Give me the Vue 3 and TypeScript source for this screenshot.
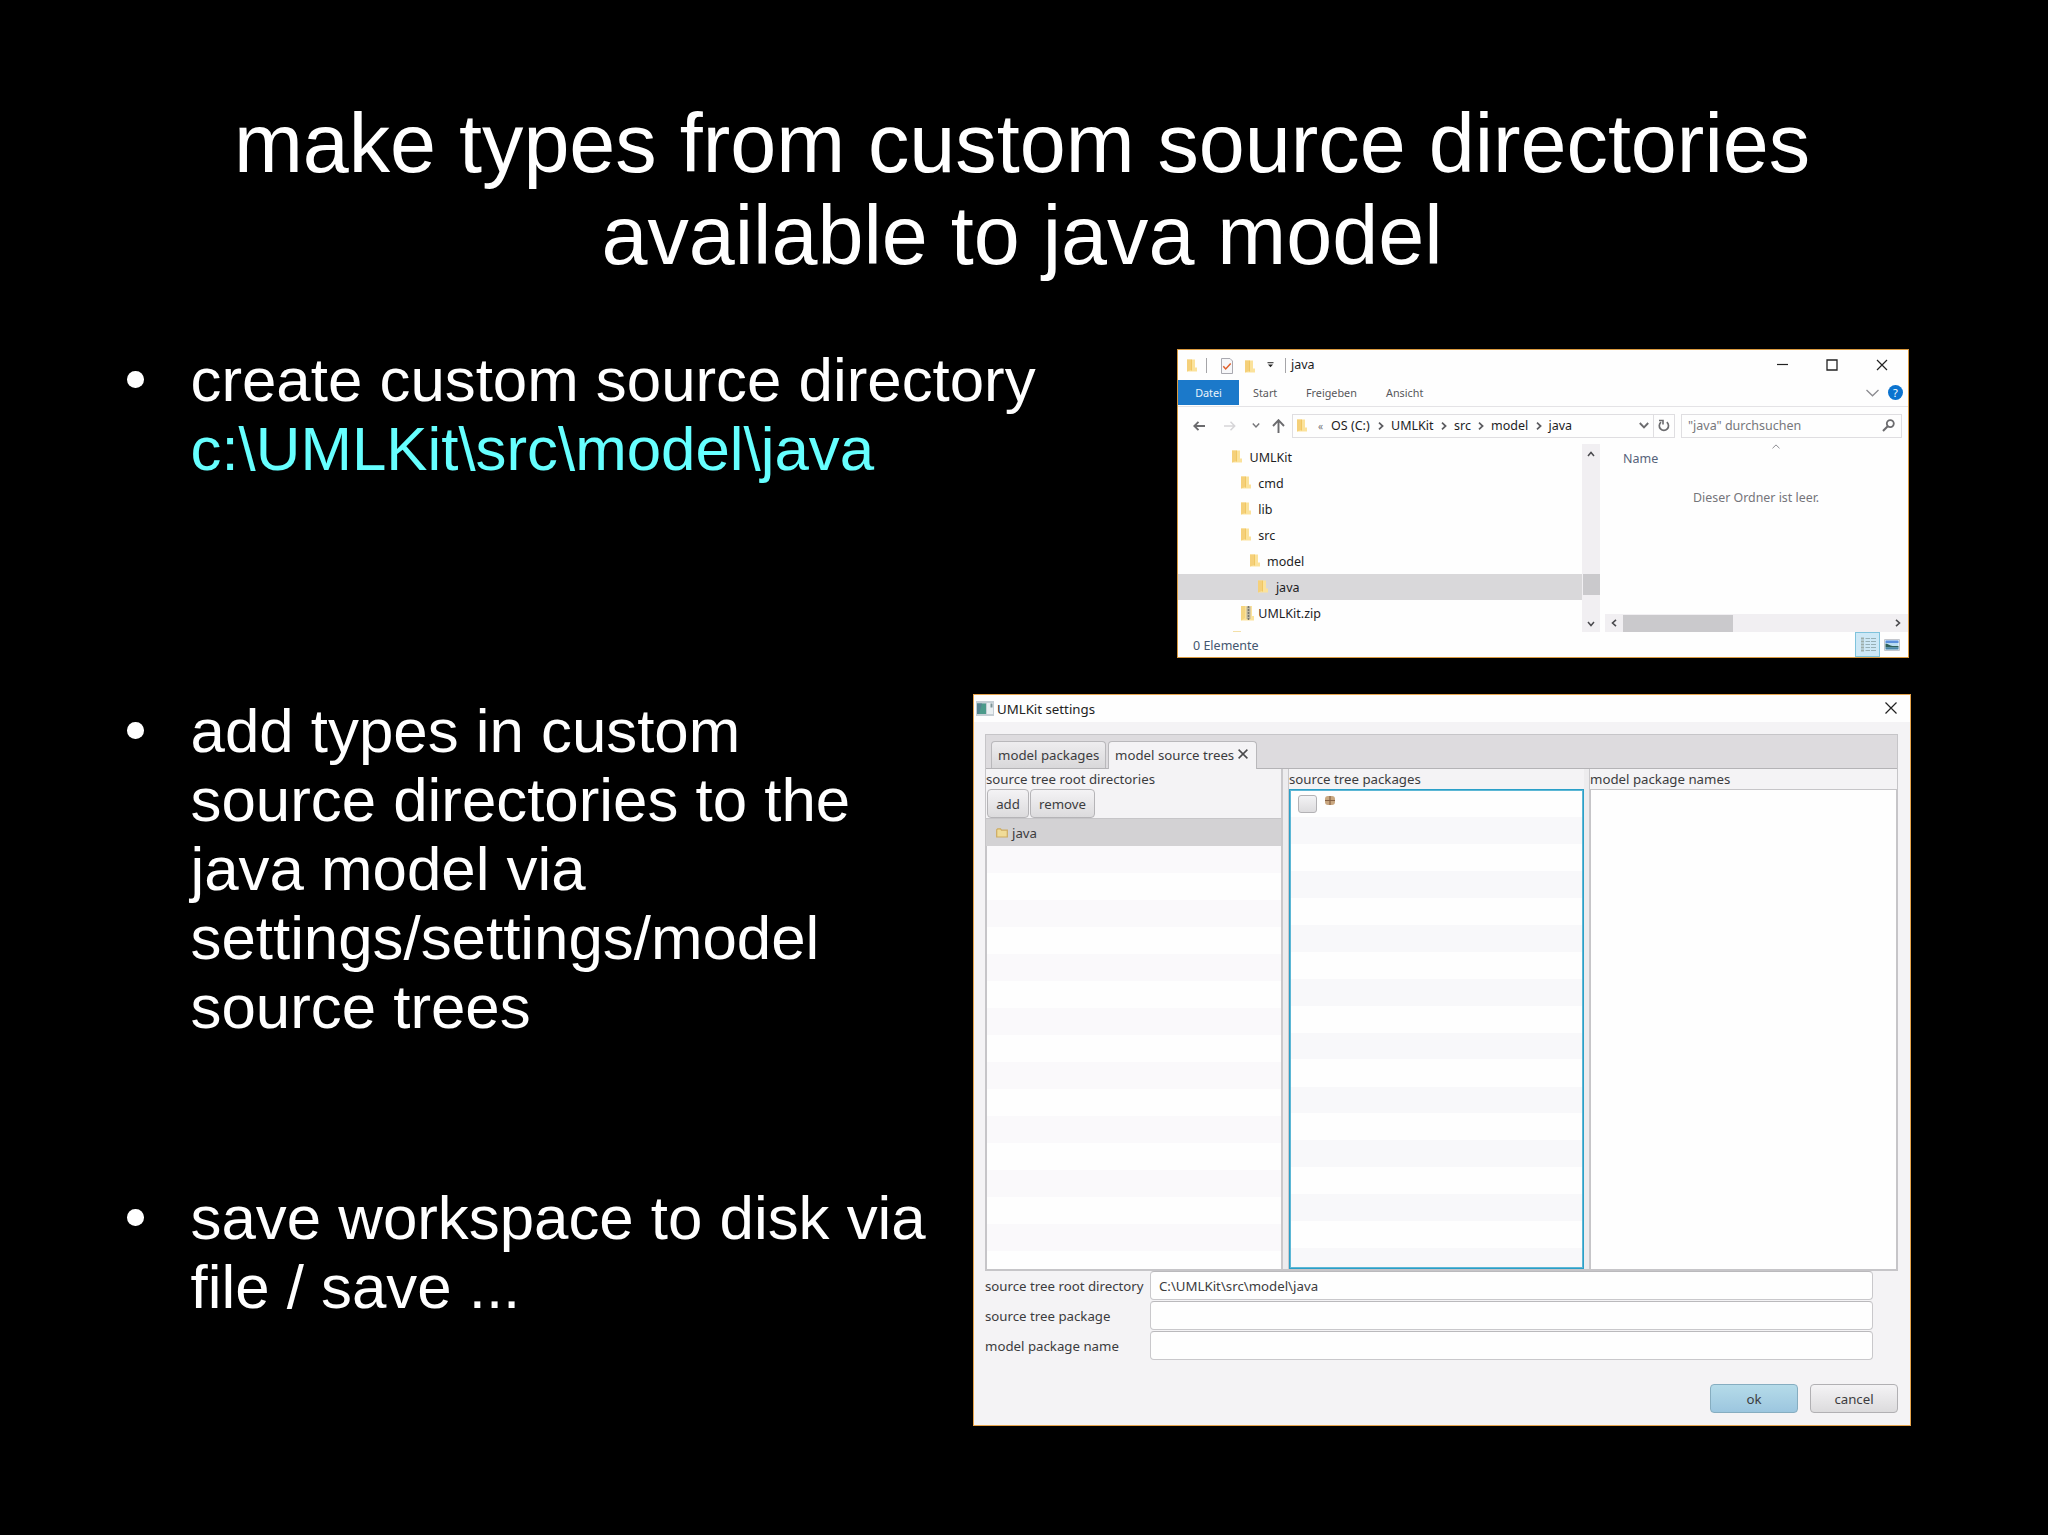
<script setup lang="ts">
interface Bullet {
  lines: { text: string; accent?: boolean }[]
}
interface TreeNode {
  name: string
  depth: number
  zip?: boolean
  selected?: boolean
}

const titleLines: string[] = ['make types from custom source directories', 'available to java model']

const bullets: Bullet[] = [
  { lines: [{ text: 'create custom source directory' }, { text: 'c:\\UMLKit\\src\\model\\java', accent: true }] },
  {
    lines: [
      { text: 'add types in custom' },
      { text: 'source directories to the' },
      { text: 'java model via' },
      { text: 'settings/settings/model' },
      { text: 'source trees' },
    ],
  },
  { lines: [{ text: 'save workspace to disk via' }, { text: 'file / save ...' }] },
]

const ribbonTabs: string[] = ['Start', 'Freigeben', 'Ansicht']

const crumbs = [
  { name: 'OS (C:)', width: 60 },
  { name: 'UMLKit', width: 63 },
  { name: 'src', width: 37 },
  { name: 'model', width: 57.5 },
]

const tree: TreeNode[] = [
  { name: 'UMLKit', depth: 0 },
  { name: 'cmd', depth: 1 },
  { name: 'lib', depth: 1 },
  { name: 'src', depth: 1 },
  { name: 'model', depth: 2 },
  { name: 'java', depth: 3, selected: true },
  { name: 'UMLKit.zip', depth: 1, zip: true },
]

const fields = [
  { label: 'source tree root directory', value: 'C:\\UMLKit\\src\\model\\java' },
  { label: 'source tree package', value: '' },
  { label: 'model package name', value: '' },
]
</script>

<template>
  <main class="slide">
    <h1 class="title">
      <span v-for="line in titleLines" :key="line">{{ line }}</span>
    </h1>

    <div class="content">
      <ul class="bullets">
        <li v-for="(b, i) in bullets" :key="i" :class="'b' + i">
          <i class="dot"></i>
          <div>
            <div v-for="l in b.lines" :key="l.text" class="line" :class="{ accent: l.accent }">{{ l.text }}</div>
          </div>
        </li>
      </ul>

      <div class="windows">
        <section class="explorer">
          <header class="ex-title">
            <svg class="folder" viewBox="0 0 10 13"><path d="M0 .5h8v8h2v4H0z" fill="#fbe29b" /><path d="M0 .5h4v10.500l-4 1.500z" fill="#f5d07a" /><path d="M4 .5h1v11H4z" fill="#f0c763" /></svg>
            <i class="sep s1"></i>
            <svg class="doc" width="12" height="16" viewBox="0 0 12 16"><path d="M.5.5h8.500l2.500 2.500v12.500H.5z" fill="#f7f7f9" stroke="#a9a9b0" /><path d="M2.300 8.300l2.400 2.700 5-5.500" fill="none" stroke="#e0602c" stroke-width="1.500" /></svg>
            <svg class="folder f2" viewBox="0 0 10 13"><path d="M0 .5h8v8h2v4H0z" fill="#fbe29b" /><path d="M0 .5h4v10.500l-4 1.500z" fill="#f5d07a" /><path d="M4 .5h1v11H4z" fill="#f0c763" /></svg>
            <svg class="caret" width="7" height="6" viewBox="0 0 7 6"><path d="M.5.700h6" stroke="#333" stroke-width="1.100" /><path d="M1 2.500h5L3.500 5.200z" fill="#222" /></svg>
            <i class="sep s2"></i>
            <span class="ex-name">java</span>
            <svg class="min" width="11" height="12" viewBox="0 0 11 12"><path d="M0 5.500h11" stroke="#222" stroke-width="1.200" /></svg>
            <svg class="max" width="12" height="12" viewBox="0 0 12 12"><path d="M1 1h10v10H1z" fill="none" stroke="#222" stroke-width="1.300" /></svg>
            <svg class="cls" width="12" height="12" viewBox="0 0 12 12"><path d="M1 1l10 10M11 1L1 11" stroke="#222" stroke-width="1.200" /></svg>
          </header>

          <nav class="ribbon">
            <span class="datei">Datei</span>
            <span v-for="t in ribbonTabs" :key="t" class="rtab" :class="t.toLowerCase()">{{ t }}</span>
            <svg class="expand" width="13" height="8" viewBox="0 0 13 8"><path d="M.5 1l6 5.800 6-5.800" fill="none" stroke="#8b8b90" stroke-width="1.300" /></svg>
            <span class="help">?</span>
          </nav>

          <div class="address">
            <svg class="back" width="12" height="10" viewBox="0 0 12 10"><path d="M12 5H1.500M5.500.8L1.300 5l4.200 4.200" fill="none" stroke="#6b6b6e" stroke-width="1.900" /></svg>
            <svg class="fwd" width="12" height="10" viewBox="0 0 12 10"><path d="M0 5h10.500M6.500.8L10.700 5 6.500 9.200" fill="none" stroke="#d6d5d8" stroke-width="1.500" /></svg>
            <svg class="hist" width="8" height="5" viewBox="0 0 8 5"><path d="M.8.6L4 3.900 7.200.6" fill="none" stroke="#77777a" stroke-width="1.500" /></svg>
            <svg class="up" width="13" height="14" viewBox="0 0 13 14"><path d="M6.500 14V1.500M1 7l5.500-5.800L12 7" fill="none" stroke="#6b6b6e" stroke-width="1.900" /></svg>
            <div class="path">
              <svg class="folder" viewBox="0 0 10 13"><path d="M0 .5h8v8h2v4H0z" fill="#fbe29b" /><path d="M0 .5h4v10.500l-4 1.500z" fill="#f5d07a" /><path d="M4 .5h1v11H4z" fill="#f0c763" /></svg>
              <span class="more">«</span>
              <span v-for="c in crumbs" :key="c.name" class="crumb" :style="{ width: c.width + 'px' }">
                {{ c.name }}
                <svg width="6" height="8" viewBox="0 0 6 8"><path d="M1 .7L4.600 4 1 7.300" fill="none" stroke="#5c5c60" stroke-width="1.700" /></svg>
              </span>
              <span>java</span>
              <svg class="drop" width="10" height="7" viewBox="0 0 10 7"><path d="M.8 1L5 5.300 9.200 1" fill="none" stroke="#6b6b6e" stroke-width="1.900" /></svg>
              <span class="refresh">
                <svg width="12" height="13" viewBox="0 0 12 13"><path d="M8.800 3.200A4.600 4.600 0 1 1 3 3.200" fill="none" stroke="#6b6b6e" stroke-width="1.700" /><path d="M1 1.500h4v4" fill="none" stroke="#6b6b6e" stroke-width="1.600" /></svg>
              </span>
            </div>
            <div class="search">
              <span>"java" durchsuchen</span>
              <svg width="13" height="13" viewBox="0 0 13 13"><circle cx="8.300" cy="4.600" r="3.500" fill="none" stroke="#6b6b6e" stroke-width="1.800" /><path d="M5.700 7.200L1 12" stroke="#6b6b6e" stroke-width="2" /></svg>
            </div>
          </div>

          <div class="ex-body">
            <div class="tree">
              <div v-for="n in tree" :key="n.name + n.depth" class="node" :class="{ selected: n.selected }" :style="{ paddingLeft: 54 + n.depth * 8.8 + 'px' }">
                <svg v-if="!n.zip" class="folder" viewBox="0 0 10 13"><path d="M0 .5h8v8h2v4H0z" fill="#fbe29b" /><path d="M0 .5h4v10.500l-4 1.500z" fill="#f5d07a" /><path d="M4 .5h1v11H4z" fill="#f0c763" /></svg>
                <svg v-else class="zip" viewBox="0 0 13 16"><path d="M0 1h11v10h2v4.500H0z" fill="#fbe29b" /><path d="M0 1h4v12l-4 2.500z" fill="#f5d580" /><path d="M5.500 1.500h4V14h-4z" fill="#bdb7a0" /><path d="M7.500 1v14" stroke="#77756c" stroke-width="1.500" stroke-dasharray="2 1" /></svg>
                <span>{{ n.name }}</span>
              </div>
              <div class="cut"></div>
            </div>
            <div class="vscroll">
              <svg class="a-up" width="8" height="6" viewBox="0 0 8 6"><path d="M1 5l3-3.500L7 5" fill="none" stroke="#4a4a4e" stroke-width="1.500" /></svg>
              <i class="vthumb"></i>
              <svg class="a-down" width="8" height="6" viewBox="0 0 8 6"><path d="M1 1l3 3.500L7 1" fill="none" stroke="#4a4a4e" stroke-width="1.500" /></svg>
            </div>
            <div class="files">
              <svg class="sort" width="8" height="5" viewBox="0 0 8 5"><path d="M.5 4.300L4 .9l3.500 3.400" fill="none" stroke="#8d8d92" /></svg>
              <div class="col-name">Name</div>
              <div class="empty">Dieser Ordner ist leer.</div>
              <div class="hscroll">
                <svg width="6" height="8" viewBox="0 0 6 8"><path d="M5 .8L1.500 4 5 7.200" fill="none" stroke="#4a4a4e" stroke-width="1.600" /></svg>
                <i class="hthumb"></i>
                <svg class="a-right" width="6" height="8" viewBox="0 0 6 8"><path d="M1 .8L4.500 4 1 7.200" fill="none" stroke="#4a4a4e" stroke-width="1.600" /></svg>
              </div>
            </div>
          </div>

          <footer class="status">
            <span>0 Elemente</span>
            <i class="view">
              <svg width="16" height="16" viewBox="0 0 16 16"><path d="M1 1.500h3M1 4.500h3M1 7.500h3M1 10.500h3M1 13.500h3" stroke="#9dadaa" stroke-width="1.800" /><path d="M5.500 1.500H10M5.500 4.500H10M5.500 7.500H10M5.500 10.500H10M5.500 13.500H10M11 1.500h5M11 4.500h5M11 7.500h5M11 10.500h5M11 13.500h5" stroke="#97b0b6" /></svg>
            </i>
            <svg class="pic" width="16" height="12" viewBox="0 0 16 12"><path d="M.5.500h15v11H.5z" fill="#fff" stroke="#c3c6cc" /><path d="M1.500 1.500h13v9h-13z" fill="#b9dcf2" /><path d="M1.500 1.500h13V4h-13z" fill="#5b8fdc" /><path d="M1.500 4.500c3 0 4 2.500 7 2.500h6v1.500h-13z" fill="#2f5f58" /><path d="M1.500 8.500h13v2h-13z" fill="#4a86a8" /></svg>
          </footer>
        </section>

        <section class="settings">
          <header class="st-title">
            <svg width="18" height="15" viewBox="0 0 18 15"><path d="M0 0h18v15H0z" fill="#c5ced4" /><path d="M1 2.500h9v10.500H1z" fill="#4b9a8a" /><path d="M1 2.500h5l-3 10.500H1z" fill="#55828f" /><path d="M11 2h6v11h-6z" fill="#e9eff1" /><path d="M14.500 2.500h2v4h-2z" fill="#7d9397" /></svg>
            <span>UMLKit settings</span>
            <svg class="cls" width="12" height="12" viewBox="0 0 12 12"><path d="M.5.500l11 11M11.500.500l-11 11" stroke="#222" stroke-width="1.200" /></svg>
          </header>

          <div class="pane">
            <div class="tabs">
              <div class="tab t1">model packages</div>
              <div class="tab t2">
                model source trees
                <svg width="10" height="10" viewBox="0 0 10 10"><path d="M.6.6l8.800 8.800M9.400.6L.6 9.400" stroke="#4a4a4c" stroke-width="1.500" /></svg>
              </div>
            </div>
            <div class="split">
              <div class="roots">
                <div class="cap">source tree root directories</div>
                <div class="tools"><span class="btn add">add</span><span class="btn rem">remove</span></div>
                <div class="root-row">
                  <svg width="12" height="10" viewBox="0 0 12 10"><path d="M.7 9V1.800L1.700.800h2.800l1 1.300h5.800V9z" fill="#f0dc98" stroke="#cdab62" stroke-width="1.200" /></svg>
                  <span>java</span>
                </div>
                <div class="stripes"></div>
              </div>
              <i class="divider"></i>
              <div class="packages">
                <div class="cap">source tree packages</div>
                <div class="list">
                  <i class="check"></i>
                  <svg width="10" height="9" viewBox="0 0 10 9"><rect width="10" height="9" rx="3" fill="#c9a780" /><path d="M5 0v9M0 4.500h10" stroke="#866244" stroke-width="1.200" /></svg>
                </div>
              </div>
              <i class="divider"></i>
              <div class="names">
                <div class="cap">model package names</div>
                <div class="list"></div>
              </div>
            </div>
          </div>

          <div class="form">
            <div v-for="f in fields" :key="f.label" class="field">
              <span class="label">{{ f.label }}</span>
              <span class="input">{{ f.value }}</span>
            </div>
          </div>

          <div class="actions">
            <span class="action ok">ok</span>
            <span class="action">cancel</span>
          </div>
        </section>
      </div>
    </div>
  </main>
</template>

<style>
body {
  background: #000;
}
</style>

<style scoped>
* {
  box-sizing: border-box;
}
svg,
i {
  display: block;
  flex: none;
}
.slide {
  display: flex;
  flex-direction: column;
  width: 2048px;
  height: 1535px;
  overflow: hidden;
  background: #000;
  color: #fff;
  font-family: "Liberation Sans", Arial, sans-serif;
}
.title {
  display: flex;
  flex-direction: column;
  align-items: center;
  height: 281px;
  margin: 0;
  padding: 97.6px 4px 0 0;
  font-size: 82.7px;
  font-weight: 400;
  line-height: 92px;
  white-space: nowrap;
}
.content {
  display: flex;
  flex: 1;
}
.bullets {
  width: 973px;
  margin: 0;
  padding: 64px 0 0 127px;
  list-style: none;
  font-size: 61.82px;
  line-height: 69px;
  white-space: nowrap;
}
.bullets li {
  display: flex;
}
.b1 {
  margin-top: 213px;
}
.b2 {
  margin-top: 142px;
}
.dot {
  width: 16.5px;
  height: 16.5px;
  margin: 26.3px 47px 0 0;
  border-radius: 50%;
  background: #fff;
}
.accent {
  color: #66ffff;
}
.windows {
  padding-top: 68px;
  font-family: "Noto Sans", "Open Sans", sans-serif;
  white-space: nowrap;
}

/* file explorer */
.explorer {
  display: flex;
  flex-direction: column;
  width: 732px;
  height: 309px;
  margin-left: 204px;
  border: 1px solid #d9993f;
  background: #fefefe;
  color: #1d1d1f;
  font-size: 12.5px;
  line-height: 20px;
}
.folder {
  width: 10px;
  height: 13px;
}
.ex-title {
  display: flex;
  align-items: center;
  height: 30px;
  padding: 0 20px 0 9px;
}
.ex-title > * {
  margin-top: 0;
}
.sep {
  width: 1px;
  height: 15px;
  background: #a5a5a8;
}
.s1 {
  margin-left: 9px;
}
.ex-title .doc {
  margin: 2px 0 0 14px;
}
.ex-title .f2 {
  margin: 2px 0 0 12px;
}
.caret {
  margin-left: 12px;
}
.s2 {
  margin-left: 11px;
}
.ex-name {
  margin-left: 5px;
}
.min {
  margin-left: auto;
}
.max {
  margin-left: 38px;
}
.ex-title .cls {
  margin-left: 38px;
}
.ribbon {
  display: flex;
  align-items: center;
  height: 27px;
  padding-bottom: 1px;
  border-bottom: 1px solid #e4e3e6;
  color: #57575b;
  font-size: 10.8px;
}
.datei {
  width: 61px;
  height: 25px;
  background: #1b79ca;
  color: #e9f3fb;
  line-height: 26px;
  text-align: center;
}
.rtab {
  padding-top: 1px;
}
.start {
  width: 53px;
  margin-left: 14px;
}
.freigeben {
  width: 80px;
}
.expand {
  margin-left: auto;
}
.help {
  width: 15px;
  height: 15px;
  margin: 0 5px 0 9px;
  border-radius: 50%;
  background: #0b73cf;
  color: #fff;
  font-size: 11px;
  line-height: 15px;
  text-align: center;
}
.address {
  display: flex;
  align-items: center;
  height: 37px;
  padding: 0 6px 0 15px;
}
.fwd {
  margin-left: 19px;
}
.hist {
  margin-left: 16px;
}
.up {
  margin-left: 12px;
}
.path {
  display: flex;
  align-items: center;
  width: 383px;
  height: 24px;
  margin-left: 7px;
  padding-left: 4px;
  border: 1px solid #dfdee1;
}
.more {
  width: 13px;
  margin-left: 11px;
  color: #77777a;
  font-size: 10px;
}
.crumb {
  display: flex;
  flex: none;
  align-items: center;
  justify-content: space-between;
  padding-right: 7px;
}
.drop {
  margin-left: auto;
}
.refresh {
  display: flex;
  align-items: center;
  justify-content: center;
  width: 21px;
  height: 22px;
  margin-left: 4px;
  border-left: 1px solid #dfdee1;
}
.search {
  display: flex;
  align-items: center;
  justify-content: space-between;
  flex: 1;
  height: 24px;
  margin-left: 6px;
  padding: 0 6px;
  border: 1px solid #dfdee1;
  color: #77777b;
}
.ex-body {
  display: flex;
  height: 188px;
}
.tree {
  width: 404px;
}
.node {
  display: flex;
  align-items: center;
  height: 26px;
}
.node.selected {
  background: #d9d8da;
}
.node span {
  margin: 1px 0 0 7.5px;
}
.node .folder {
  margin-top: -1px;
}
.node .zip {
  width: 13px;
  height: 16px;
  margin-top: -1px;
}
.node .zip + span {
  margin-left: 4.5px;
}
.cut {
  width: 8px;
  height: 1px;
  margin: 5px 0 0 55px;
  background: #f3e0a8;
}
.vscroll {
  display: flex;
  flex-direction: column;
  align-items: center;
  width: 18px;
  background: #f1eff2;
}
.a-up {
  margin-top: 7px;
}
.vthumb {
  width: 17px;
  height: 21px;
  margin-top: 117px;
  background: #cac9cc;
}
.a-down {
  margin-top: 26px;
}
.files {
  display: flex;
  flex-direction: column;
  width: 308px;
  padding-left: 5px;
}
.sort {
  margin: 0 0 0 167px;
}
.col-name {
  margin: 0 0 0 18px;
  color: #56637a;
}
.empty {
  margin: 19px 0 0 88px;
  color: #75757a;
  font-size: 12.4px;
}
.hscroll {
  display: flex;
  align-items: center;
  width: 303px;
  height: 18px;
  margin-top: auto;
  padding: 0 7px 0 6px;
  background: #f1eff2;
}
.hthumb {
  width: 110px;
  height: 17px;
  margin-left: 6px;
  background: #cac9cc;
}
.a-right {
  margin-left: auto;
}
.status {
  display: flex;
  align-items: center;
  flex: 1;
  padding: 0 8px 0 15px;
  color: #44566f;
}
.status span {
  margin-top: 2px;
}
.view {
  display: flex;
  align-items: center;
  justify-content: center;
  width: 25px;
  height: 25px;
  margin-left: auto;
  border: 1px solid #7fc3dc;
  background: #cde8f6;
}
.pic {
  margin-left: 4px;
}

/* settings dialog */
.settings {
  display: flex;
  flex-direction: column;
  width: 938px;
  height: 732px;
  margin-top: 36px;
  border: 1px solid #e6a44c;
  background: #f4f3f5;
  color: #3c3c3e;
  font-size: 13.25px;
  line-height: 20px;
}
.st-title {
  display: flex;
  align-items: center;
  height: 27px;
  padding: 0 13px 0 2px;
  background: #fefefe;
  color: #222;
}
.st-title span {
  margin: 0 0 0 3px;
}
.st-title .cls {
  margin: -1px 0 0 auto;
}
.pane {
  width: 913px;
  height: 537px;
  margin: 12px 0 0 11px;
  border: 1px solid #c6c5c8;
  border-width: 1px 1px 2px 1px;
}
.tabs {
  display: flex;
  align-items: flex-end;
  height: 34px;
  padding-left: 5px;
  border-bottom: 1px solid #b4b3b6;
  background: #dddbde;
}
.tab {
  display: flex;
  align-items: center;
  height: 27px;
  padding: 0 6px 1px;
  border: 1px solid #b9b8bb;
  border-bottom: 0;
  border-radius: 4px 4px 0 0;
}
.t1 {
  width: 115px;
  background: linear-gradient(#eeedef, #d9d8da);
}
.t2 {
  width: 149px;
  height: 28px;
  margin: 0 0 -1px 2px;
  padding-bottom: 2px;
  background: #f4f3f5;
}
.t2 svg {
  margin: -1px 0 0 4px;
}
.split {
  display: flex;
  height: 500px;
}
.cap {
  height: 20px;
  line-height: 21px;
}
.roots {
  display: flex;
  flex-direction: column;
  width: 297px;
  border-right: 2px solid #c9c8cb;
}
.tools {
  display: flex;
  height: 29px;
  padding-left: 1px;
}
.btn {
  height: 29px;
  border: 1px solid #b5b4b7;
  border-radius: 4px;
  background: linear-gradient(#f4f3f5, #dcdbdd);
  line-height: 28px;
  text-align: center;
}
.add {
  width: 42px;
}
.rem {
  width: 65px;
  margin-left: 1px;
}
.root-row {
  display: flex;
  align-items: center;
  height: 28px;
  padding-left: 10px;
  border-top: 1px solid #c6c5c8;
  background: #d3d2d4;
}
.root-row svg {
  margin-top: 1px;
}
.root-row span {
  margin: 0 0 0 4px;
}
.stripes {
  flex: 1;
  border-left: 1px solid #c6c5c8;
  background: repeating-linear-gradient(#faf9fb 0 27px, #fefefe 27px 54px);
}
.divider {
  width: 6px;
  border-right: 1px solid #c9c8cb;
  background: #edecee;
}
.packages {
  display: flex;
  flex-direction: column;
  width: 295px;
}
.packages .list {
  display: flex;
  align-items: flex-start;
  flex: 1;
  padding: 5px 0 0 8px;
  border: 1px solid #2a9fc8;
  outline: 1px solid #5db7d5;
  outline-offset: -2px;
  background: repeating-linear-gradient(#fefefe 0 27px, #f8f8fa 27px 53.900px);
}
.check {
  width: 19px;
  height: 18px;
  border: 1px solid #b3b2b5;
  border-radius: 3px;
  background: linear-gradient(#f3f3f5, #dddcde);
}
.packages svg {
  margin: 1px 0 0 8px;
}
.names {
  display: flex;
  flex-direction: column;
  flex: 1;
}
.names .list {
  flex: 1;
  border: 1px solid #c6c5c8;
  border-bottom: 0;
  background: #fefefe;
}
.form {
  padding: 0 0 0 11px;
}
.field {
  display: flex;
  align-items: center;
  height: 29.800px;
}
.label {
  width: 165px;
  margin-top: 1px;
}
.input {
  width: 723px;
  height: 29px;
  padding-left: 8px;
  border: 1px solid #c9c8cb;
  border-top-color: #bab9bc;
  border-radius: 4px;
  background: #fefefe;
  line-height: 29px;
}
.actions {
  display: flex;
  justify-content: flex-end;
  gap: 12px;
  padding: 24px 12px 0 0;
}
.action {
  width: 88px;
  height: 29px;
  border: 1px solid #b1b0b3;
  border-radius: 4px;
  background: linear-gradient(#f4f3f5, #dcdbdd);
  line-height: 28px;
  text-align: center;
}
.ok {
  border-color: #86adc0;
  background: linear-gradient(#b5dbe9, #9cc6df);
}
</style>
